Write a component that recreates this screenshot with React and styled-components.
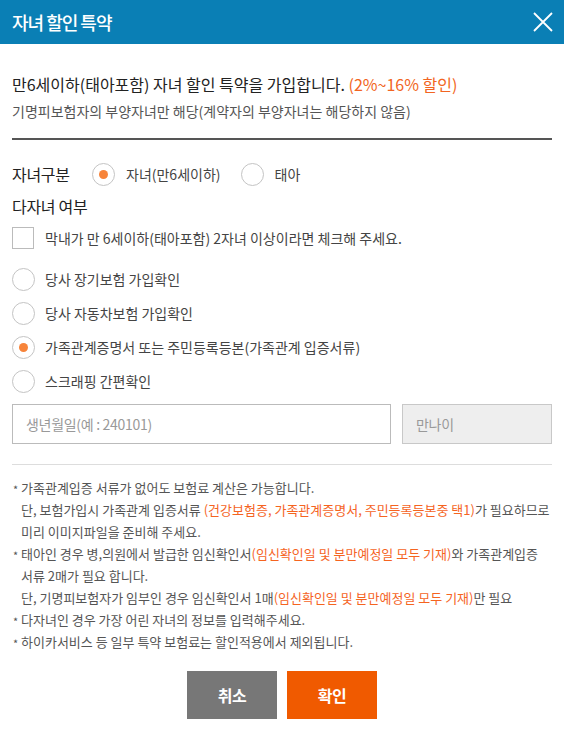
import React from "react";
import styled, { createGlobalStyle } from "styled-components";

const GlobalStyle = createGlobalStyle`
	body {
		margin: 0;
		background: #fff;
		font-family: "Noto Sans CJK KR", "Noto Sans", sans-serif;
		color: #333;
	}
`;

const Modal = styled.div`
	width: 564px;
	height: 729px;
	background: #fff;
`;

const Header = styled.div`
	height: 44px;
	background: #0a7fb5;
	display: flex;
	align-items: center;
	justify-content: space-between;
	padding: 0 11px 0 12px;
`;

const Title = styled.h1`
	margin: 0;
	font-size: 18px;
	font-weight: 500;
	color: #fff;
	letter-spacing: -1px;
`;

const CloseButton = styled.button`
	border: 0;
	background: none;
	padding: 0;
	width: 20px;
	height: 20px;
	cursor: pointer;
`;

const Body = styled.div`
	padding: 27px 12px 0;
`;

const Lead = styled.p`
	margin: 0;
	font-size: 16px;
	line-height: 26px;
	color: #222;
	letter-spacing: 0;
`;

const Accent = styled.span`
	color: ${(props) => (props.strong ? "#f26522" : "#f5641f")};
`;

const SubText = styled.p`
	margin: 3px 0 0;
	font-size: 14px;
	line-height: 22px;
	color: #555;
	letter-spacing: 0;
`;

const Divider = styled.hr`
	margin: ${(props) => (props.light ? "20px 0 12px" : "16px 0 17px")};
	border: 0;
	height: ${(props) => (props.light ? "1px" : "2px")};
	background: ${(props) => (props.light ? "#ddd" : "#555")};
`;

const Row = styled.div`
	display: flex;
	align-items: center;
	height: ${(props) => props.h || 34}px;
`;

const Label = styled.span`
	font-size: 16px;
	color: #222;
	letter-spacing: -0.3px;
	width: ${(props) => (props.w ? `${props.w}px` : "auto")};
`;

const OptionText = styled.span`
	font-size: 14px;
	color: #444;
	letter-spacing: 0;
	margin-left: ${(props) => props.ml || 10}px;
	margin-right: ${(props) => props.mr || 0}px;
`;

const RadioCircle = styled.span`
	width: 23px;
	height: 23px;
	border: 1px solid #c4c4c4;
	border-radius: 50%;
	box-sizing: border-box;
	display: inline-flex;
	align-items: center;
	justify-content: center;
	flex-shrink: 0;
	&::after {
		content: "";
		width: 9px;
		height: 9px;
		border-radius: 50%;
		background: ${(props) => (props.checked ? "#f7843a" : "transparent")};
	}
`;

const CheckBox = styled.span`
	width: 22px;
	height: 22px;
	border: 1px solid #bbb;
	box-sizing: border-box;
	flex-shrink: 0;
`;

const OptionList = styled.div`
	display: flex;
	flex-direction: column;
	margin-top: 7px;
`;

const InputRow = styled.div`
	display: flex;
	gap: 11px;
	margin-top: 6px;
`;

const Field = styled.div`
	height: 40px;
	box-sizing: border-box;
	border: 1px solid ${(props) => (props.disabled ? "#c8c8c8" : "#bbb")};
	background: ${(props) => (props.disabled ? "#eee" : "#fff")};
	flex: ${(props) => (props.disabled ? "0 0 150px" : "1")};
	display: flex;
	align-items: center;
	padding-left: 13px;
	font-size: 14px;
	color: #999;
	letter-spacing: -0.3px;
`;

const Notes = styled.ul`
	list-style: none;
	margin: 0;
	padding: 0;
	font-size: 13px;
	line-height: 22px;
	color: #555;
	letter-spacing: 0;
`;

const Note = styled.li`
	position: relative;
	padding-left: 9px;
	&::before {
		content: "*";
		position: absolute;
		left: 1px;
		top: 1px;
		font-size: 11px;
	}
`;

const Buttons = styled.div`
	display: flex;
	justify-content: center;
	gap: 10px;
	margin-top: 18px;
`;

const Button = styled.button`
	width: 90px;
	height: 48px;
	border: 0;
	background: ${(props) => (props.primary ? "#f05a00" : "#777")};
	color: #fff;
	font-family: inherit;
	font-size: 16px;
	font-weight: 700;
	letter-spacing: -0.5px;
	cursor: pointer;
`;

const options = [
	{ text: "당사 장기보험 가입확인", checked: false },
	{ text: "당사 자동차보험 가입확인", checked: false },
	{ text: "가족관계증명서 또는 주민등록등본(가족관계 입증서류)", checked: true },
	{ text: "스크래핑 간편확인", checked: false },
];

const App = () => {
	return (
		<>
			<GlobalStyle />
			<Modal>
				<Header>
					<Title>자녀 할인 특약</Title>
					<CloseButton aria-label="닫기">
						<svg width="20" height="20" viewBox="0 0 20 20">
							<path d="M1 1L19 19M19 1L1 19" stroke="#fff" strokeWidth="1.8" />
						</svg>
					</CloseButton>
				</Header>
				<Body>
					<Lead>
						만6세이하(태아포함) 자녀 할인 특약을 가입합니다.{" "}
						<Accent strong>(2%~16% 할인)</Accent>
					</Lead>
					<SubText>
						기명피보험자의 부양자녀만 해당(계약자의 부양자녀는 해당하지 않음)
					</SubText>
					<Divider />
					<Row>
						<Label w={80}>자녀구분</Label>
						<RadioCircle checked />
						<OptionText ml={11} mr={20}>
							자녀(만6세이하)
						</OptionText>
						<RadioCircle />
						<OptionText ml={11}>태아</OptionText>
					</Row>
					<Row h={30}>
						<Label>다자녀 여부</Label>
					</Row>
					<Row>
						<CheckBox />
						<OptionText ml={11}>
							막내가 만 6세이하(태아포함) 2자녀 이상이라면 체크해 주세요.
						</OptionText>
					</Row>
					<OptionList>
						{options.map((opt) => (
							<Row key={opt.text}>
								<RadioCircle checked={opt.checked} />
								<OptionText>{opt.text}</OptionText>
							</Row>
						))}
					</OptionList>
					<InputRow>
						<Field>생년월일(예 : 240101)</Field>
						<Field disabled>만나이</Field>
					</InputRow>
					<Divider light />
					<Notes>
						<Note>
							가족관계입증 서류가 없어도 보험료 계산은 가능합니다.
							<br />
							단, 보험가입시 가족관계 입증서류{" "}
							<Accent>(건강보험증, 가족관계증명서, 주민등록등본중 택1)</Accent>가
							필요하므로
							<br />
							미리 이미지파일을 준비해 주세요.
						</Note>
						<Note>
							태아인 경우 병,의원에서 발급한 임신확인서
							<Accent>(임신확인일 및 분만예정일 모두 기재)</Accent>와 가족관계입증
							<br />
							서류 2매가 필요 합니다.
							<br />
							단, 기명피보험자가 임부인 경우 임신확인서 1매
							<Accent>(임신확인일 및 분만예정일 모두 기재)</Accent>만 필요
						</Note>
						<Note>다자녀인 경우 가장 어린 자녀의 정보를 입력해주세요.</Note>
						<Note>하이카서비스 등 일부 특약 보험료는 할인적용에서 제외됩니다.</Note>
					</Notes>
					<Buttons>
						<Button>취소</Button>
						<Button primary>확인</Button>
					</Buttons>
				</Body>
			</Modal>
		</>
	);
};

export default App;
